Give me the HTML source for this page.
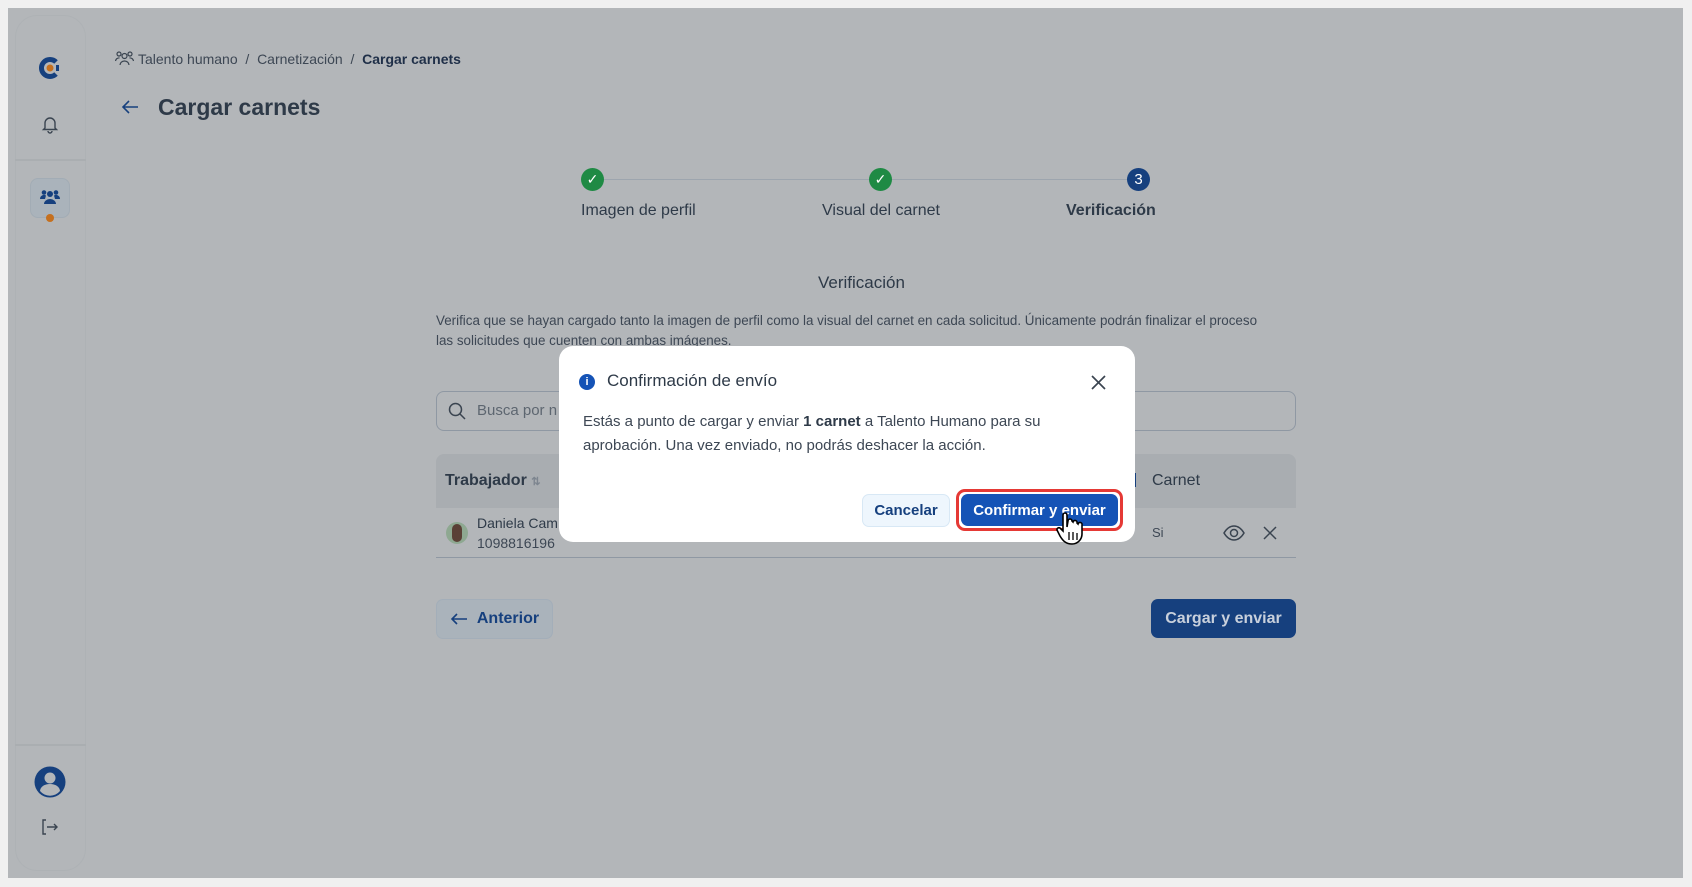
<!DOCTYPE html>
<html><head><meta charset="utf-8"><style>
*{box-sizing:border-box;margin:0;padding:0}
body{width:1692px;height:887px;background:#f0f0f0;font-family:"Liberation Sans",sans-serif;position:relative;overflow:hidden;color:#2e3a48}
.ov{position:absolute;left:8px;top:8px;width:1675px;height:870px;background:#b3b6b9}
.abs{position:absolute}
.side{position:absolute;left:15px;top:15px;width:71px;height:856px;border:1px solid #aeb2b5;border-radius:22px}
.t{position:absolute;white-space:nowrap}
.circ{position:absolute;width:23px;height:23px;border-radius:50%;background:#1f8a44;top:168px;color:#fff;font-size:14px;text-align:center;line-height:23px}
.btn{position:absolute;border-radius:7px;font-weight:bold;font-size:16px;display:flex;align-items:center;justify-content:center}
</style></head><body>
<div class="ov"></div>
<div class="side"></div>
<div class="abs" style="left:15px;top:159px;width:71px;height:2px;background:#aaaeb1"></div>
<div class="abs" style="left:15px;top:744px;width:71px;height:2px;background:#aaaeb1"></div>
<svg class="abs" style="left:38px;top:56px" width="24" height="24" viewBox="0 0 24 24"><path d="M18 6A8.5 8.5 0 1 0 18 18" stroke="#16407e" stroke-width="5" fill="none"/><circle cx="12" cy="12" r="3.5" fill="#c5701f"/><rect x="18" y="9" width="3" height="6" fill="#16407e"/></svg>
<svg class="abs" style="left:40px;top:114px" width="20" height="20" viewBox="0 0 20 20" fill="none" stroke="#3a4450" stroke-width="1.4"><path d="M5 14V9a5 5 0 0 1 10 0v5l1.5 1.5h-13z"/><path d="M8 17a2 2 0 0 0 4 0"/></svg>
<div class="abs" style="left:30px;top:178px;width:40px;height:40px;border-radius:8px;background:#aab3bb;border:1px solid #a2acb5"></div>
<svg class="abs" style="left:40px;top:189px" width="20" height="16" viewBox="0 0 20 16" fill="#16407e"><circle cx="10" cy="5" r="3"/><path d="M4 15a6 5 0 0 1 12 0z"/><circle cx="4" cy="3.5" r="2.3"/><circle cx="16" cy="3.5" r="2.3"/><path d="M0 10a4 4 0 0 1 6-3.5L5 10z M20 10a4 4 0 0 0-6-3.5L15 10z"/></svg>
<div class="abs" style="left:46px;top:214px;width:8px;height:8px;border-radius:50%;background:#c5701f"></div>
<svg class="abs" style="left:34px;top:766px" width="32" height="32" viewBox="0 0 32 32"><circle cx="16" cy="16" r="15.5" fill="#16407e"/><circle cx="16" cy="12" r="5.5" fill="#b3b6b9"/><path d="M6 25a10 7 0 0 1 20 0a13 13 0 0 1-20 0z" fill="#b3b6b9"/></svg>
<svg class="abs" style="left:41px;top:818px" width="18" height="18" viewBox="0 0 18 18" fill="none" stroke="#3a4450" stroke-width="1.4"><path d="M5 2H2v14h3"/><path d="M6 9h10M13 6l3 3-3 3"/></svg>
<svg class="abs" style="left:115px;top:50px" width="19" height="16" viewBox="0 0 19 16" fill="none" stroke="#3a4450" stroke-width="1.2"><circle cx="9.5" cy="6" r="2.5"/><path d="M5 15a4.5 4 0 0 1 9 0"/><circle cx="4" cy="4" r="2"/><circle cx="15" cy="4" r="2"/><path d="M0.5 11a3.5 3.5 0 0 1 4-3M18.5 11a3.5 3.5 0 0 0-4-3"/></svg>
<div class="t" style="left:138px;top:51px;font-size:14px;color:#3d4754">Talento humano &nbsp;/ &nbsp;Carnetización &nbsp;/ &nbsp;<b style="color:#1f2f48">Cargar carnets</b></div>
<svg class="abs" style="left:120px;top:98px" width="20" height="18" viewBox="0 0 20 18" fill="none" stroke="#16407e" stroke-width="1.6"><path d="M18 9H3M9 3L3 9l6 6"/></svg>
<div class="t" style="left:158px;top:94px;font-size:23px;font-weight:bold;color:#2e3a48">Cargar carnets</div>
<div class="abs" style="left:604px;top:179px;width:530px;height:1px;background:#9da5ae"></div>
<div class="circ" style="left:581px">✓</div>
<div class="circ" style="left:869px">✓</div>
<div class="circ" style="left:1127px;background:#16407e;font-size:15px">3</div>
<div class="t" style="left:581px;top:202px;font-size:16px;color:#2e3a48">Imagen de perfil</div>
<div class="t" style="left:822px;top:202px;font-size:16px;color:#2e3a48">Visual del carnet</div>
<div class="t" style="left:1066px;top:202px;font-size:16px;font-weight:bold;color:#2e3a48">Verificación</div>
<div class="t" style="left:818px;top:273px;font-size:17px;color:#2e3a48">Verificación</div>
<div class="abs" style="left:436px;top:311px;width:830px;font-size:13.4px;line-height:20px;color:#3d4754">Verifica que se hayan cargado tanto la imagen de perfil como la visual del carnet en cada solicitud. Únicamente podrán finalizar el proceso las solicitudes que cuenten con ambas imágenes.</div>
<div class="abs" style="left:436px;top:391px;width:860px;height:40px;border:1px solid #8f98a3;border-radius:8px"></div>
<svg class="abs" style="left:448px;top:402px" width="18" height="18" viewBox="0 0 18 18" fill="none" stroke="#3a4450" stroke-width="1.5"><circle cx="7.5" cy="7.5" r="6"/><path d="M12 12l5 5"/></svg>
<div class="t" style="left:477px;top:402px;font-size:15px;color:#5d6670">Busca por n</div>
<div class="abs" style="left:436px;top:454px;width:860px;height:54px;background:#a9adb1;border-radius:8px 8px 0 0"></div>
<div class="abs" style="left:436px;top:557px;width:860px;height:1px;background:#8f98a3"></div>
<div class="t" style="left:445px;top:472px;font-size:16px;font-weight:bold;color:#2e3a48">Trabajador <span style="font-size:11px;color:#7d858f">⇅</span></div>
<div class="t" style="left:1152px;top:472px;font-size:16px;color:#2e3a48">Carnet</div>
<div class="abs" style="left:1134px;top:473px;width:2px;height:14px;background:#16407e"></div>
<div class="abs" style="left:446px;top:522px;width:22px;height:22px;border-radius:50%;background:#8ea891"></div>
<div class="abs" style="left:452px;top:524px;width:10px;height:18px;border-radius:5px;background:#5a4036"></div>
<div class="t" style="left:477px;top:515px;font-size:14px;color:#2e3a48">Daniela Cam</div>
<div class="t" style="left:477px;top:535px;font-size:14px;color:#3d4754">1098816196</div>
<div class="t" style="left:1152px;top:525px;font-size:13px;color:#3d4754">Si</div>
<svg class="abs" style="left:1223px;top:524px" width="22" height="18" viewBox="0 0 22 18" fill="none" stroke="#3a4450" stroke-width="1.5"><path d="M1 9c3-5 6-7 10-7s7 2 10 7c-3 5-6 7-10 7S4 14 1 9z"/><circle cx="11" cy="9" r="3.5"/></svg>
<svg class="abs" style="left:1262px;top:525px" width="16" height="16" viewBox="0 0 16 16" stroke="#3a4450" stroke-width="1.5"><path d="M2 2l12 12M14 2L2 14"/></svg>
<div class="btn" style="left:436px;top:599px;width:117px;height:40px;border:1px solid #a3aeb9;background:#aab3bb;color:#16407e">
<svg width="18" height="14" viewBox="0 0 18 14" fill="none" stroke="#16407e" stroke-width="1.6" style="margin-right:9px"><path d="M17 7H2M7 2L2 7l5 5"/></svg>Anterior</div>
<div class="btn" style="left:1151px;top:599px;width:145px;height:39px;background:#16407e;color:#c8d0dc">Cargar y enviar</div>
<div class="abs" style="left:559px;top:346px;width:576px;height:196px;background:#fff;border-radius:14px"></div>
<div class="abs" style="left:579px;top:374px;width:16px;height:16px;border-radius:50%;background:#1553b6;color:#fff;font-size:11px;font-weight:bold;text-align:center;line-height:16px">i</div>
<div class="t" style="left:607px;top:371px;font-size:17px;color:#2e3a48">Confirmación de envío</div>
<svg class="abs" style="left:1091px;top:375px" width="15" height="15" viewBox="0 0 15 15" stroke="#3a4450" stroke-width="1.7"><path d="M1 1l13 13M14 1L1 14"/></svg>
<div class="abs" style="left:583px;top:410px;width:520px;font-size:15px;line-height:24px;color:#3d4754">Estás a punto de cargar y enviar <b style="color:#2e3a48">1 carnet</b> a Talento Humano para su aprobación. Una vez enviado, no podrás deshacer la acción.</div>
<div class="btn" style="left:862px;top:494px;width:88px;height:33px;background:#eef6fd;border:1px solid #d8e8f5;color:#16407e;font-size:15px">Cancelar</div>
<div class="abs" style="left:956px;top:489px;width:167px;height:42px;border:3px solid #e53935;border-radius:9px"></div>
<div class="btn" style="left:961px;top:494px;width:157px;height:32px;background:#1553b6;color:#fff;font-size:15px">Confirmar y enviar</div>
<svg class="abs" style="left:1055px;top:512px" width="30" height="36" viewBox="0 0 30 36"><path d="M8 3a2 2 0 0 1 4 0v12l1-6a2 2 0 0 1 4 0l1 1a2 2 0 0 1 4 1l1 1a2 2 0 0 1 4 1v9c0 5-4 10-10 10s-9-3-12-8l-3-6a2 2 0 0 1 3-2l3 3z" fill="#fff" stroke="#000" stroke-width="1.6"/><path d="M14 20v8M18 20v8M22 21v7" stroke="#000" stroke-width="1.3"/></svg>
</body></html>
